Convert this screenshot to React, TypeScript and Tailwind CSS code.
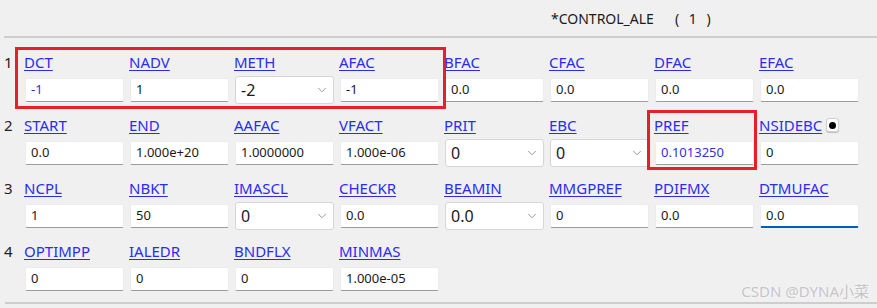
import { ChevronDown } from 'lucide-react';

type Field = {
  name: string;
  value: string;
  kind?: 'select';
  blue?: boolean;
  focused?: boolean;
  button?: boolean;
};

const rows: Field[][] = [
  [
    { name: 'DCT', value: '-1', blue: true },
    { name: 'NADV', value: '1' },
    { name: 'METH', value: '-2', kind: 'select' },
    { name: 'AFAC', value: '-1' },
    { name: 'BFAC', value: '0.0' },
    { name: 'CFAC', value: '0.0' },
    { name: 'DFAC', value: '0.0' },
    { name: 'EFAC', value: '0.0' },
  ],
  [
    { name: 'START', value: '0.0' },
    { name: 'END', value: '1.000e+20' },
    { name: 'AAFAC', value: '1.0000000' },
    { name: 'VFACT', value: '1.000e-06' },
    { name: 'PRIT', value: '0', kind: 'select' },
    { name: 'EBC', value: '0', kind: 'select' },
    { name: 'PREF', value: '0.1013250', blue: true },
    { name: 'NSIDEBC', value: '0', button: true },
  ],
  [
    { name: 'NCPL', value: '1' },
    { name: 'NBKT', value: '50' },
    { name: 'IMASCL', value: '0', kind: 'select' },
    { name: 'CHECKR', value: '0.0' },
    { name: 'BEAMIN', value: '0.0', kind: 'select' },
    { name: 'MMGPREF', value: '0' },
    { name: 'PDIFMX', value: '0.0' },
    { name: 'DTMUFAC', value: '0.0', focused: true },
  ],
  [
    { name: 'OPTIMPP', value: '0' },
    { name: 'IALEDR', value: '0' },
    { name: 'BNDFLX', value: '0' },
    { name: 'MINMAS', value: '1.000e-05' },
  ],
];

function Cell({ f }: { f: Field }) {
  return (
    <div className="flex flex-col">
      <div className="h-[20px] flex items-center">
        <span className="text-[15px] leading-[20px] text-[#2b2bf5] underline underline-offset-[2px] decoration-1">
          {f.name}
        </span>
        {f.button && (
          <span className="ml-[4px] w-[13px] h-[14px] bg-white rounded-[3px] border border-[#d0d0d0] shadow-[0_1px_1px_#bdbdbd] flex items-center justify-center">
            <span className="w-[7px] h-[7px] rounded-full bg-black" />
          </span>
        )}
      </div>
      {f.kind === 'select' ? (
        <div className="mt-[4px] ml-px h-[28px] bg-white border border-[#d6d6d6] rounded-[3px] flex items-center justify-between pl-[5px] pr-[4px]">
          <span className="text-[16px] text-[#1a1a1a]">{f.value}</span>
          <ChevronDown size={14} strokeWidth={1.3} className="text-[#7a7a7a]" />
        </div>
      ) : (
        <div
          className={
            'mt-[6px] ml-px h-[24px] bg-white rounded-[2px] flex items-center pl-[5px] text-[13px] border border-[#ececec] ' +
            (f.focused ? 'border-b-2 border-b-[#005fb8] ' : 'border-b-[#9c9c9c] ') +
            (f.blue ? 'text-[#3030e0]' : 'text-[#1a1a1a]')
          }
        >
          {f.value}
        </div>
      )}
    </div>
  );
}

export default function App() {
  return (
    <div className="relative w-[877px] h-[308px] overflow-hidden bg-[#f0f0f0] font-['Noto_Sans',sans-serif]">
      <div className="h-[36px] flex items-center pl-[551px] text-[14px] text-[#1a1a1a]">
        <span>*CONTROL_ALE</span>
        <span className="ml-[21px] tracking-[3px]">( 1 )</span>
      </div>
      <div className="ml-[4px] h-[2px] bg-[#cdcdcd]" />

      <div className="pt-[14px] flex flex-col gap-[11px]">
        {rows.map((row, i) => (
          <div key={i} className="flex">
            <div className="w-[24px] pl-[4px] h-[20px] leading-[20px] text-[15px] text-[#222]">{i + 1}</div>
            <div className="grid grid-cols-[repeat(8,100px)] gap-x-[5px]">
              {row.map((f) => (
                <Cell key={f.name} f={f} />
              ))}
            </div>
          </div>
        ))}
      </div>

      <div className="mt-[11px] ml-[5px] h-[2px] bg-[#cdcdcd]" />

      <div className="absolute left-[15px] top-[47px] w-[431px] h-[62px] border-[3px] border-[#e5202a]" />
      <div className="absolute left-[647px] top-[110px] w-[110px] h-[60px] border-[3px] border-[#e5202a]" />

      <div className="absolute right-[8px] top-[280px] text-[15px] text-[#c4c4c4] [text-shadow:0_0_2px_#fff] font-['Noto_Sans','Noto_Sans_CJK_SC',sans-serif]">
        CSDN @DYNA小菜
      </div>
    </div>
  );
}
